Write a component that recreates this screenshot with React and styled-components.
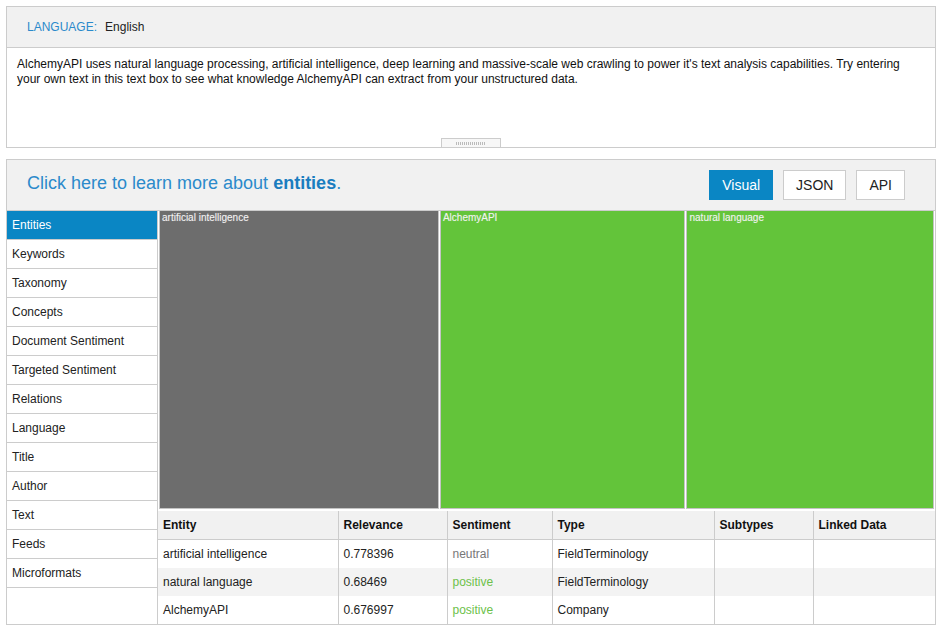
import React from 'react'
import styled, { createGlobalStyle } from 'styled-components'

const GlobalStyle = createGlobalStyle`
    body {
        margin: 0;
        padding: 6px;
        background: #fff;
        font-family: "Liberation Sans", Arial, sans-serif;
        font-size: 12px;
        color: #222;
    }
`;

const menu = [
    'Entities', 'Keywords', 'Taxonomy', 'Concepts', 'Document Sentiment',
    'Targeted Sentiment', 'Relations', 'Language', 'Title', 'Author',
    'Text', 'Feeds', 'Microformats',
];

const cells = [
    { label: 'artificial intelligence', size: 279, color: '#6d6d6d' },
    { label: 'AlchemyAPI', size: 244, color: '#63c43a' },
    { label: 'natural language', size: 246, color: '#63c43a' },
];

const rows = [
    { entity: 'artificial intelligence', relevance: '0.778396', sentiment: 'neutral', type: 'FieldTerminology' },
    { entity: 'natural language', relevance: '0.68469', sentiment: 'positive', type: 'FieldTerminology' },
    { entity: 'AlchemyAPI', relevance: '0.676997', sentiment: 'positive', type: 'Company' },
];

const App = () => {
    return (
        <Page>
            <GlobalStyle />
            <Panel>
                <LangBar>
                    <LangLabel>LANGUAGE:</LangLabel>
                    <LangValue>English</LangValue>
                </LangBar>
                <TextBox>
                    AlchemyAPI uses natural language processing, artificial intelligence, deep learning and massive-scale web crawling to power it's text analysis capabilities. Try entering your own text in this text box to see what knowledge AlchemyAPI can extract from your unstructured data.
                    <Grip />
                </TextBox>
            </Panel>
            <Panel>
                <Header>
                    <LearnMore>Click here to learn more about <b>entities</b>.</LearnMore>
                    <Buttons>
                        <ViewButton active>Visual</ViewButton>
                        <ViewButton>JSON</ViewButton>
                        <ViewButton>API</ViewButton>
                    </Buttons>
                </Header>
                <Body>
                    <Sidebar>
                        {menu.map((item, i) => (
                            <MenuItem key={item} active={i === 0}>{item}</MenuItem>
                        ))}
                    </Sidebar>
                    <Main>
                        <Treemap>
                            {cells.map(c => (
                                <Cell key={c.label} size={c.size} color={c.color}>{c.label}</Cell>
                            ))}
                        </Treemap>
                        <Table>
                            <colgroup>
                                <col style={{ width: 180 }} />
                                <col style={{ width: 109 }} />
                                <col style={{ width: 105 }} />
                                <col style={{ width: 162 }} />
                                <col style={{ width: 99 }} />
                                <col />
                            </colgroup>
                            <thead>
                                <tr>
                                    <Th>Entity</Th>
                                    <Th>Relevance</Th>
                                    <Th>Sentiment</Th>
                                    <Th>Type</Th>
                                    <Th>Subtypes</Th>
                                    <Th>Linked Data</Th>
                                </tr>
                            </thead>
                            <tbody>
                                {rows.map((r, i) => (
                                    <Tr key={r.entity} striped={i % 2 === 1}>
                                        <Td>{r.entity}</Td>
                                        <Td>{r.relevance}</Td>
                                        <Td sentiment={r.sentiment}>{r.sentiment}</Td>
                                        <Td>{r.type}</Td>
                                        <Td></Td>
                                        <Td></Td>
                                    </Tr>
                                ))}
                            </tbody>
                        </Table>
                    </Main>
                </Body>
            </Panel>
        </Page>
    )
}

const Page = styled.div`
    display: flex;
    flex-direction: column;
    gap: 11px;
`;
const Panel = styled.div`
    border: 1px solid #cccccc;
    background: #fff;
`;
const LangBar = styled.div`
    display: flex;
    align-items: center;
    height: 40px;
    padding-left: 20px;
    background: #f1f1f1;
    border-bottom: 1px solid #cccccc;
`;
const LangLabel = styled.span`
    color: #2b8acb;
    margin-right: 8px;
`;
const LangValue = styled.span`
    color: #222;
`;
const TextBox = styled.div`
    position: relative;
    height: 99px;
    box-sizing: border-box;
    padding: 9px 10px;
    line-height: 15px;
    color: #111;
`;
const Grip = styled.div`
    position: absolute;
    bottom: 0;
    left: 50%;
    transform: translateX(-50%);
    width: 58px;
    height: 8px;
    border: 1px solid #cccccc;
    border-bottom: none;
    background:
        repeating-linear-gradient(90deg, #bbb 0 1px, transparent 1px 2px) center / 30px 3px no-repeat,
        #f7f7f7;
`;
const Header = styled.div`
    display: flex;
    align-items: center;
    justify-content: space-between;
    height: 50px;
    padding: 0 30px 0 20px;
    background: #f1f1f1;
    border-bottom: 1px solid #cccccc;
`;
const LearnMore = styled.div`
    font-size: 18px;
    color: #2b8acb;
    margin-top: -3px;
    b {
        color: #1a7dbf;
    }
`;
const Buttons = styled.div`
    display: flex;
    gap: 10px;
`;
const ViewButton = styled.button`
    height: 30px;
    padding: 0 12px;
    font-family: inherit;
    font-size: 14px;
    border: 1px solid ${({ active }) => active ? '#0a86c4' : '#cccccc'};
    background: ${({ active }) => active ? '#0a86c4' : '#fff'};
    color: ${({ active }) => active ? '#fff' : '#222'};
    cursor: pointer;
`;
const Body = styled.div`
    display: flex;
`;
const Sidebar = styled.div`
    width: 150px;
    flex-shrink: 0;
    border-right: 1px solid #cccccc;
`;
const MenuItem = styled.div`
    display: flex;
    align-items: center;
    height: 28px;
    padding-left: 5px;
    border-bottom: 1px solid #cccccc;
    background: ${({ active }) => active ? '#0a86c4' : '#fff'};
    color: ${({ active }) => active ? '#fff' : '#222'};
`;
const Main = styled.div`
    flex: 1;
    display: flex;
    flex-direction: column;
    min-width: 0;
`;
const Treemap = styled.div`
    display: flex;
    height: 298px;
    padding: 0 1px;
    gap: 1px;
    box-sizing: border-box;
`;
const Cell = styled.div`
    flex: ${({ size }) => size} 1 0;
    background: ${({ color }) => color};
    border: 1px solid #c4c4c4;
    border-top: none;
    padding: 1px 2px;
    font-size: 10px;
    color: #f2f2f2;
    text-shadow: 0 0 1px rgba(255, 255, 255, 0.3);
`;
const Table = styled.table`
    width: 100%;
    table-layout: fixed;
    border-collapse: collapse;
    margin-top: 2px;
`;
const Th = styled.th`
    height: 28px;
    padding: 0 5px;
    text-align: left;
    font-weight: bold;
    background: #f1f1f1;
    color: #111;
    border-left: 1px solid #cccccc;
    border-bottom: 1px solid #cccccc;
    &:first-child {
        border-left: none;
    }
`;
const Tr = styled.tr`
    background: ${({ striped }) => striped ? '#f3f3f3' : '#fff'};
`;
const Td = styled.td`
    height: 28px;
    padding: 0 5px;
    border-left: 1px solid #cccccc;
    color: ${({ sentiment }) => sentiment === 'positive' ? '#6cc14a' : sentiment === 'neutral' ? '#777' : '#222'};
    &:first-child {
        border-left: none;
    }
`;

export default App
